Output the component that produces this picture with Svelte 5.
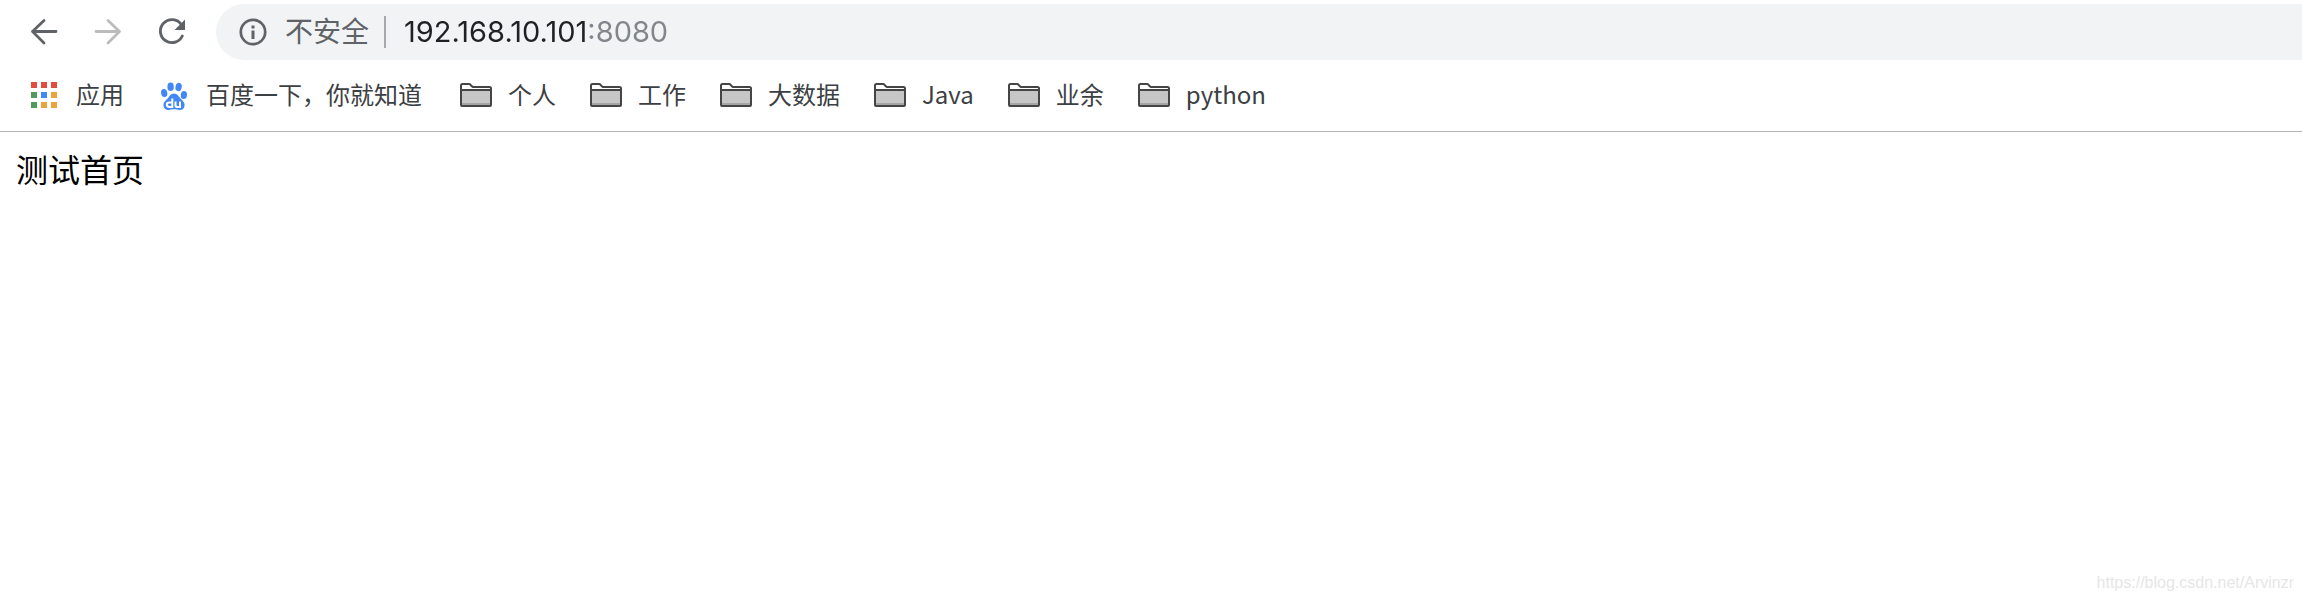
<script>
  const sites = [
    { label: '应用', icon: 'apps' },
    { label: '百度一下，你就知道', icon: 'baidu' }
  ];
  const folders = ['个人', '工作', '大数据', 'Java', '业余', 'python'];
  const tiles = [
    '#e34b3f', '#e34b3f', '#e34b3f',
    '#519a5f', '#4387f5', '#e8a53a',
    '#519a5f', '#e8a53a', '#e8a53a'
  ];
  let address = $state('192.168.10.101:8080');
</script>

<header>
  <div class="toolbar">
    <nav aria-label="导航">
      <button class="tool" aria-label="后退">
        <svg width="30" height="30" viewBox="0 0 30 30" fill="none" stroke="#5f6368" stroke-width="2.800" stroke-linecap="round">
          <path d="M27 14.500H3.500M15 3.500L3.500 14.500L15 26" stroke-linejoin="round" />
        </svg>
      </button>
      <button class="tool" aria-label="前进" disabled>
        <svg width="30" height="30" viewBox="0 0 30 30" fill="none" stroke="#babcbe" stroke-width="2.800" stroke-linecap="round">
          <path d="M3 14.500H26.500M15 3.500L26.500 14.500L15 26" stroke-linejoin="round" />
        </svg>
      </button>
      <button class="tool" aria-label="重新加载">
        <svg width="30" height="30" viewBox="0 0 30 30">
          <path d="M24.300 7.500A11.500 11.500 0 1 0 25.300 19" fill="none" stroke="#5f6368" stroke-width="2.900" stroke-linecap="round" />
          <path d="M28 2.500V13H17.500Z" fill="#5f6368" />
        </svg>
      </button>
    </nav>
    <div class="omnibox">
      <button class="security">
        <svg width="28" height="28" viewBox="0 0 28 28" aria-hidden="true">
          <circle cx="14" cy="14" r="12.200" fill="none" stroke="#5f6368" stroke-width="2.700" />
          <path d="M12.500 7.500h3v3h-3zM12.500 12.500h3v8.500h-3z" fill="#5f6368" />
        </svg>
        <span>不安全</span>
      </button>
      <span class="divider"></span>
      <input type="text" aria-label="地址栏" spellcheck="false" bind:value={address} />
    </div>
  </div>

  <nav class="bookmarks" aria-label="书签">
    <ul>
      {#each sites as site}
        <li>
          <a href="#{site.icon}">
            {#if site.icon === 'apps'}
              <svg width="32" height="32" viewBox="0 0 32 32" aria-hidden="true">
                {#each tiles as fill, i}
                  <rect x={3 + (i % 3) * 10} y={3 + Math.floor(i / 3) * 10} width="6" height="6" {fill} />
                {/each}
              </svg>
            {:else}
              <svg width="32" height="32" viewBox="0 0 32 32" aria-hidden="true">
                <g fill="#4387f7">
                  <ellipse cx="12.600" cy="7.800" rx="3.200" ry="4.300" />
                  <ellipse cx="20.600" cy="8" rx="3.100" ry="4.200" transform="rotate(12 20.600 8)" />
                  <ellipse cx="6.200" cy="14" rx="3.100" ry="4.100" transform="rotate(-10 6.200 14)" />
                  <ellipse cx="25.900" cy="16" rx="3.100" ry="4.100" transform="rotate(6 25.900 16)" />
                  <path d="M16 14.500c3 0 4.200 2.200 6 4.400 2 2.300 4.600 3.700 4.600 7 0 3.200-2 5-5 5-2 0-3.500-.6-5.600-.6s-3.400.6-5.400.6c-3 0-5.100-1.800-5.100-5 0-3.300 2.700-4.700 4.600-7 1.700-2.200 2.900-4.400 5.900-4.400z" />
                </g>
                <g fill="none" stroke="#fff" stroke-width="2">
                  <path d="M14.300 19.500V28H11.400C9.300 28 8.800 27 8.800 25.600S9.600 23.400 11.400 23.400H14.300" />
                  <path d="M17.500 22.500V26.200Q17.500 28 19.200 28H22V22.500" />
                </g>
              </svg>
            {/if}
            <span>{site.label}</span>
          </a>
        </li>
      {/each}
    </ul>
    <ul>
      {#each folders as folder}
        <li>
          <button>
            <svg width="32" height="32" viewBox="0 0 32 32" aria-hidden="true">
              <path d="M1 5.500Q1 4 2.500 4H9L12.500 7H29.500Q31 7 31 8.500V26.500Q31 28 29.500 28H2.500Q1 28 1 26.500Z" fill="#fff" />
              <path d="M1 11H31V27H1Z" fill="#c6c6c6" />
              <path d="M1 24H31V27H1Z" fill="#a5a5a5" />
              <path d="M1 11H31M1 6.500Q1 5 2.500 5H9Q10 5 10.700 6T12.800 8H29.500Q31 8 31 9.500V26Q31 27 30 27H2Q1 27 1 26Z" fill="none" stroke="#454545" stroke-width="2" />
            </svg>
            <span>{folder}</span>
          </button>
        </li>
      {/each}
    </ul>
  </nav>
</header>

<main>测试首页</main>
<footer>https://blog.csdn.net/Arvinzr</footer>

<style>
  :global(body) {
    margin: 0;
    background: #fff;
  }
  :global(#app) {
    min-height: 100vh;
    display: flex;
    flex-direction: column;
    font-family: Inter, 'Noto Sans CJK SC', sans-serif;
  }
  button,
  input {
    margin: 0;
    padding: 0;
    border: 0;
    background: none;
    font: inherit;
    color: inherit;
  }
  svg {
    display: block;
    flex: none;
  }
  header {
    border-bottom: 1px solid #b4b4b4;
  }
  .toolbar {
    display: flex;
    align-items: center;
    padding: 4px 0 0 29px;
  }
  .toolbar nav {
    display: flex;
    gap: 34px;
    margin-right: 29px;
  }
  .tool {
    width: 30px;
    height: 30px;
  }
  .omnibox {
    flex: 1;
    min-width: 0;
    height: 56px;
    box-sizing: border-box;
    padding-left: 23px;
    display: flex;
    align-items: center;
    border-radius: 28px 0 0 28px;
    background: #f1f3f4;
    font-size: 28px;
    line-height: 40px;
  }
  .security {
    display: flex;
    align-items: center;
    gap: 18px;
    color: #5f6368;
    white-space: nowrap;
  }
  .divider {
    width: 2px;
    height: 32px;
    margin: 0 18px 0 15px;
    background: #a6a8ab;
  }
  input {
    flex: 1;
    min-width: 0;
    height: 40px;
    outline: 0;
    font-size: 29px;
    color: transparent;
    background: linear-gradient(90deg, #202124 184px, #80868b 184px);
    background-clip: text;
    -webkit-background-clip: text;
    caret-color: #202124;
  }
  .bookmarks {
    display: flex;
    gap: 38px;
    padding: 13px 28px 16px;
    align-items: center;
    color: #3c4043;
    font-family: 'Noto Sans CJK SC', sans-serif;
    font-size: 24px;
    line-height: 42px;
  }
  ul {
    display: flex;
    gap: 34px;
    margin: 0;
    padding: 0;
    list-style: none;
  }
  .bookmarks a,
  .bookmarks button {
    display: flex;
    align-items: center;
    gap: 16px;
    color: inherit;
    text-decoration: none;
    white-space: nowrap;
  }
  .bookmarks svg {
    margin-top: 2px;
  }
  main {
    flex: 1;
    padding: 17px 16px;
    font-size: 32px;
    line-height: 44px;
    color: #000;
  }
  footer {
    padding: 0 8px 8px;
    text-align: right;
    font: 16px/18px 'Liberation Sans', sans-serif;
    color: #e6e6e6;
  }
</style>
